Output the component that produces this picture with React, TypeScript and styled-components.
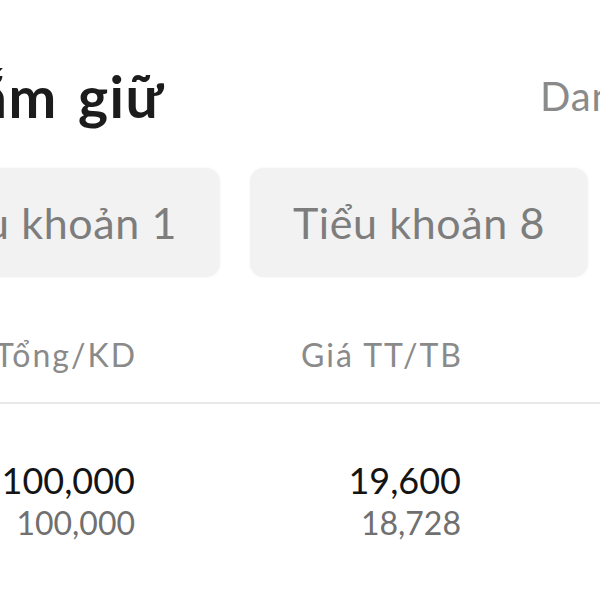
import React from "react";
import styled, { createGlobalStyle } from "styled-components";

const GlobalStyle = createGlobalStyle`
  html, body {
    margin: 0;
    padding: 0;
    background: #ffffff;
    overflow: hidden;
  }
  body {
    font-family: Lato, "Open Sans", sans-serif;
  }
`;

const Page = styled.div`
  width: 600px;
  height: 600px;
  overflow: hidden;
  background: #fff;
  display: flex;
  flex-direction: column;
`;

const HeaderRow = styled.div`
  display: flex;
  align-items: center;
  height: 60px;
  margin-top: 66px;
`;

const TitleSlot = styled.div`
  flex: 0 0 163px;
  min-width: 0;
  display: flex;
  justify-content: flex-end;
  white-space: nowrap;
`;

const Title = styled.h1`
  margin: 0;
  flex: none;
  font-family: Lato, sans-serif;
  font-weight: 700;
  font-size: 57px;
  line-height: 60px;
  letter-spacing: 1.5px;
  word-spacing: 5px;
  margin-right: -1.5px;
  color: #1c1c1c;
`;

const LinkSlot = styled.div`
  margin-left: auto;
  flex: 0 0 60px;
  min-width: 0;
  white-space: nowrap;
`;

const Link = styled.span`
  font-family: Lato, sans-serif;
  font-size: 40px;
  color: #8a8a8a;
  letter-spacing: 0.8px;
`;

const TabsRow = styled.div`
  width: 588px;
  display: flex;
  justify-content: flex-end;
  gap: 30px;
  margin-top: 42px;
`;

const Tab = styled.div`
  flex: 0 0 338px;
  height: 109px;
  border-radius: 14px;
  background: #f2f2f2;
  box-shadow: 0 0 3px rgba(0, 0, 0, 0.05);
  display: flex;
  align-items: center;
  justify-content: center;
  font-family: Lato, sans-serif;
  font-size: 43px;
  letter-spacing: 0.6px;
  color: #7d7d7d;
  white-space: nowrap;
`;

const TableHead = styled.div`
  margin-top: 62px;
  padding-bottom: 32px;
  border-bottom: 2px solid #e9e9e9;
`;

const Grid = styled.div`
  display: grid;
  grid-template-columns: 135px 326px;
`;

const Cell = styled.div`
  display: flex;
  flex-direction: column;
  align-items: flex-end;
  white-space: nowrap;
  min-width: 0;
`;

const HeadText = styled.span`
  font-family: Lato, sans-serif;
  font-size: 32px;
  line-height: 31px;
  letter-spacing: 2px;
  margin-right: -2px;
  color: #8a8a8a;
`;

const Body = styled.div`
  margin-top: 58px;
`;

const Primary = styled.span`
  font-family: Lato, sans-serif;
  font-size: 36px;
  line-height: 36px;
  color: #141414;
`;

const Secondary = styled.span`
  font-family: Lato, sans-serif;
  font-size: 32px;
  line-height: 32px;
  margin-top: 9px;
  color: #707070;
`;

const rows = [
  { total: "100,000", avail: "100,000", price: "19,600", avg: "18,728" },
];

export default function App() {
  return (
    <>
      <GlobalStyle />
      <Page>
        <HeaderRow>
          <TitleSlot>
            <Title>Danh mục nắm giữ</Title>
          </TitleSlot>
          <LinkSlot>
            <Link>Danh mục</Link>
          </LinkSlot>
        </HeaderRow>
        <TabsRow>
          <Tab>Tiểu khoản 1</Tab>
          <Tab>Tiểu khoản 8</Tab>
        </TabsRow>
        <TableHead>
          <Grid>
            <Cell>
              <HeadText>Tổng/KD</HeadText>
            </Cell>
            <Cell>
              <HeadText>Giá TT/TB</HeadText>
            </Cell>
          </Grid>
        </TableHead>
        <Body>
          {rows.map((r, i) => (
            <Grid key={i}>
              <Cell>
                <Primary>{r.total}</Primary>
                <Secondary>{r.avail}</Secondary>
              </Cell>
              <Cell>
                <Primary>{r.price}</Primary>
                <Secondary>{r.avg}</Secondary>
              </Cell>
            </Grid>
          ))}
        </Body>
      </Page>
    </>
  );
}
